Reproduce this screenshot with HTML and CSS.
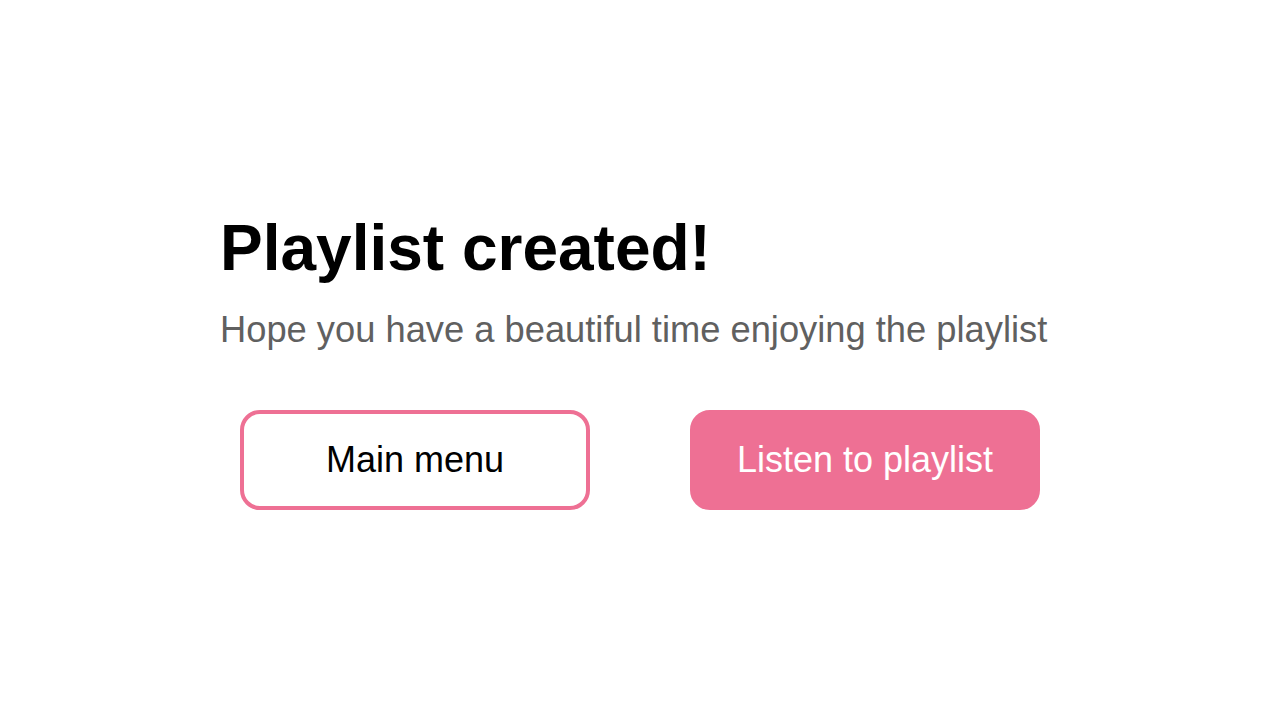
FILE: index.html
```html
<!DOCTYPE html>
<html lang="en">
<head>
<meta charset="utf-8">
<title>Playlist created</title>
<link rel="stylesheet" href="styles.css">
</head>
<body>
<main class="page">
  <section class="panel">
    <h1 class="title">Playlist created!</h1>
    <p class="subtitle">Hope you have a beautiful time enjoying the playlist</p>
    <div class="actions">
      <button class="btn btn-outline" type="button">Main menu</button>
      <button class="btn btn-filled" type="button">Listen to playlist</button>
    </div>
  </section>
</main>
</body>
</html>
```

FILE: styles.css
```css
html, body {
  margin: 0;
  padding: 0;
  background: #ffffff;
}
body {
  font-family: "Liberation Sans", Arial, Helvetica, sans-serif;
}
.page {
  height: 100vh;
  display: flex;
  align-items: center;
  justify-content: center;
}
.panel {
  width: 840px;
  display: flex;
  flex-direction: column;
}
.title {
  margin: 0;
  font-size: 64px;
  line-height: 74px;
  font-weight: 700;
  color: #000000;
}
.subtitle {
  margin: 24px 0 0;
  font-size: 36.3px;
  line-height: 42px;
  color: #606060;
}
.actions {
  margin-top: 59px;
  padding: 0 20px;
  display: flex;
  justify-content: space-between;
}
.btn {
  box-sizing: border-box;
  width: 350px;
  height: 100px;
  border-radius: 20px;
  border: 4px solid #ee7094;
  font-family: "Liberation Sans", Arial, Helvetica, sans-serif;
  font-size: 36px;
  cursor: pointer;
}
.btn-outline {
  background: #ffffff;
  color: #000000;
}
.btn-filled {
  background: #ee7094;
  color: #ffffff;
}
```
